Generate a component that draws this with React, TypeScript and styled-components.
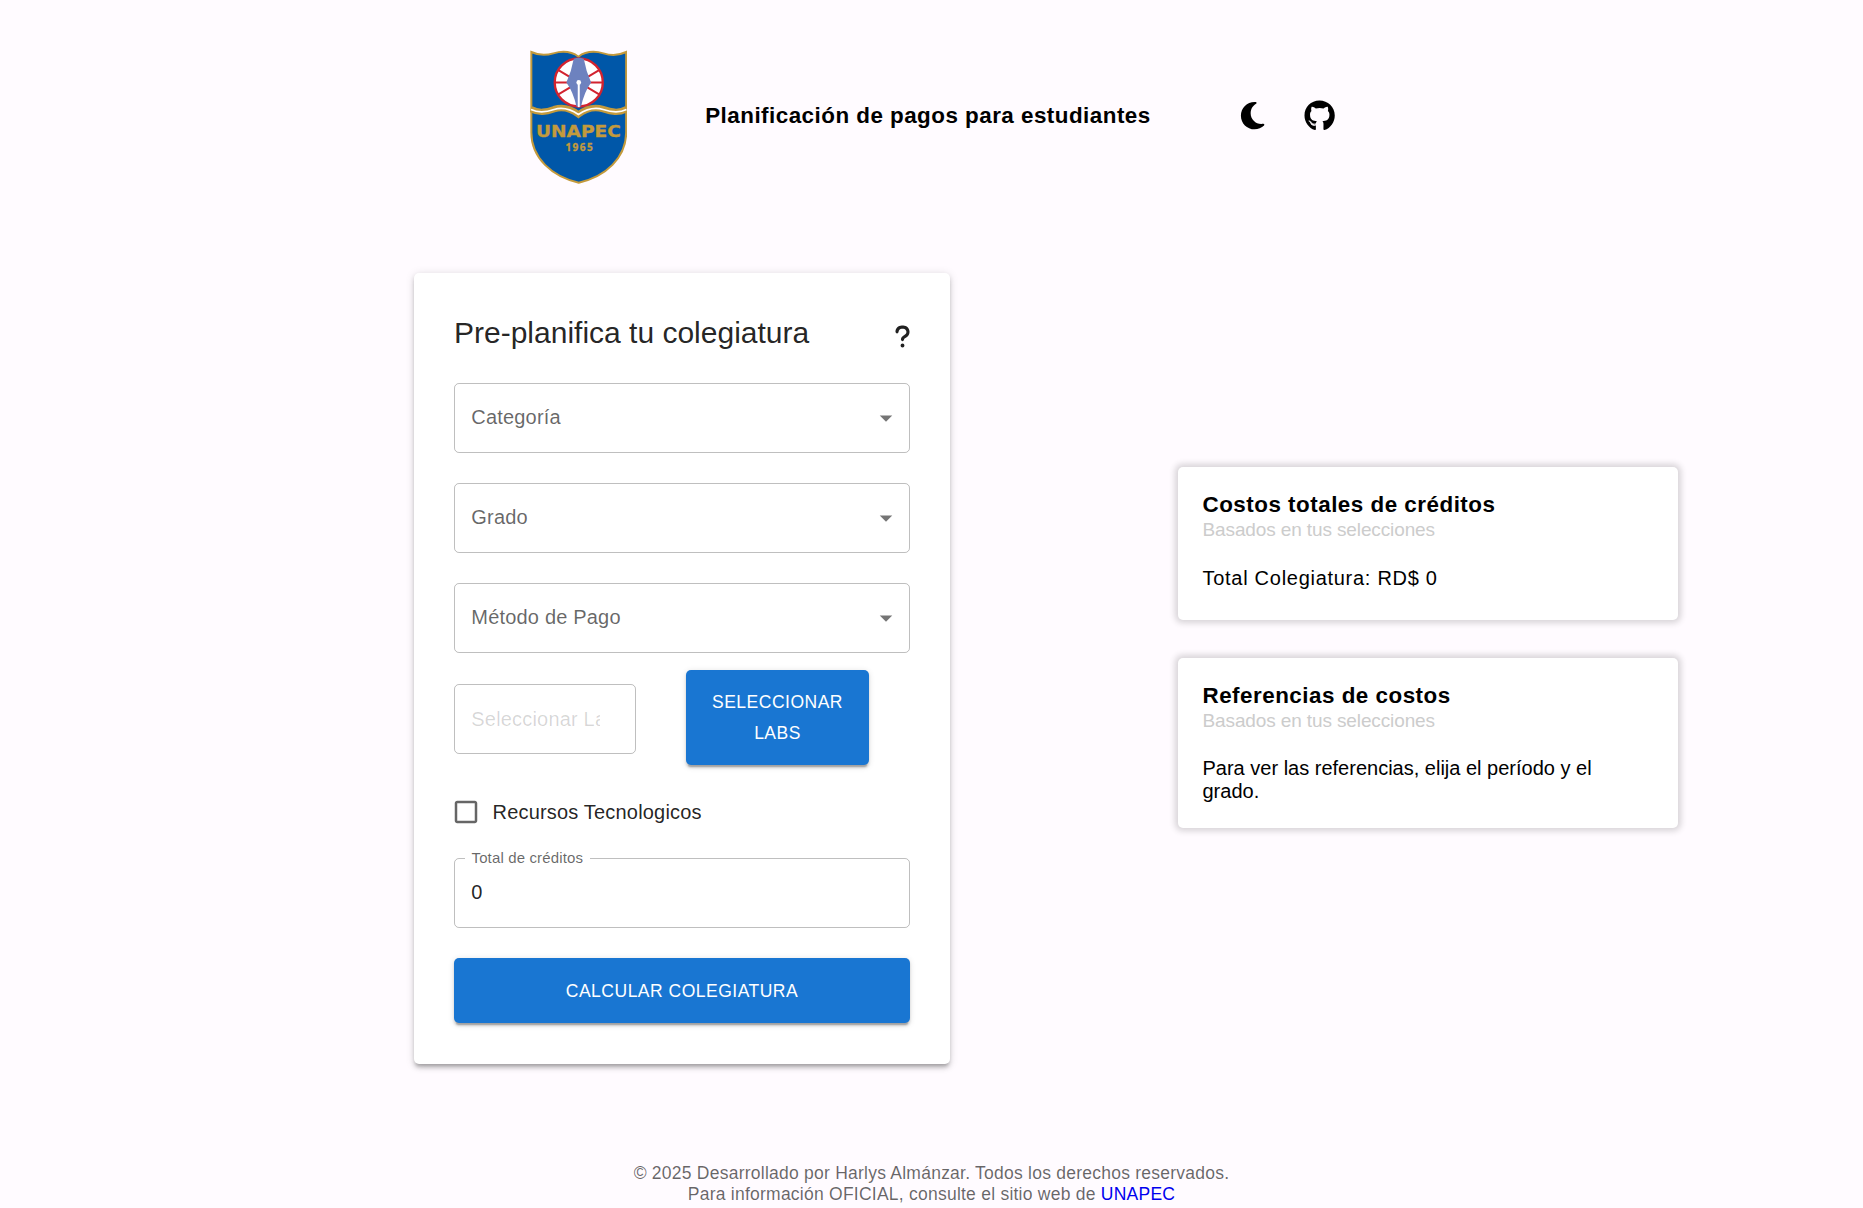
import React, { useState } from "react";
import styled, { createGlobalStyle } from "styled-components";
import { FaGithub, FaMoon, FaQuestion } from "react-icons/fa6";
import { MdArrowDropDown, MdCheckBoxOutlineBlank } from "react-icons/md";

const GlobalStyle = createGlobalStyle`
  *, *::before, *::after { box-sizing: border-box; }
  body {
    margin: 0;
    background: #fffbff;
    color: #000;
    font-family: "Liberation Sans", Arial, sans-serif;
    font-size: 20px;
  }
  h1, h2, p { margin: 0; }
`;

const Page = styled.div`
  height: 1208px;
  overflow: hidden;
  display: flex;
  flex-direction: column;
`;

const Header = styled.header`
  display: flex;
  align-items: center;
  height: 233px;
  padding-left: 529.5px;
`;

const Logo = styled.svg`
  width: 97.5px;
  height: 134px;
  flex: none;
`;

const SiteTitle = styled.h1`
  width: 535px;
  margin-left: 78.2px;
  padding-bottom: 1px;
  font-size: 22.4px;
  line-height: 26px;
  letter-spacing: 0.48px;
  white-space: nowrap;
`;

const HeaderActions = styled.nav`
  display: flex;
  align-items: center;
  gap: 35.5px;
  margin-left: -3.4px;
  padding-bottom: 2px;
  font-size: 31.25px;
  svg { display: block; }
`;

const Main = styled.main`
  display: flex;
  align-items: flex-start;
  gap: 228px;
  margin-top: 40px;
  padding-left: 414px;
`;

const FormCard = styled.form`
  width: 536px;
  height: 790.5px;
  padding: 40px;
  background: #fff;
  border-radius: 5px;
  color: rgba(0, 0, 0, 0.87);
  box-shadow:
    0 3.75px 3.75px -2.5px rgba(0, 0, 0, 0.2),
    0 3.75px 5px 0 rgba(0, 0, 0, 0.14),
    0 1.25px 10px 0 rgba(0, 0, 0, 0.12);
`;

const FormHeader = styled.div`
  display: flex;
  justify-content: space-between;
  align-items: flex-start;
  height: 70.3px;
`;

const FormTitle = styled.h2`
  font-size: 30px;
  font-weight: 400;
  line-height: 40px;
`;

const HelpIcon = styled(FaQuestion)`
  margin: 11.3px -4.5px 0 0;
  font-size: 25px;
`;

const Field = styled.div<{ $narrow?: boolean }>`
  position: relative;
  display: flex;
  align-items: center;
  justify-content: space-between;
  width: ${(p) => (p.$narrow ? "182px" : "100%")};
  height: 70px;
  padding: 0 8px 0 16.3px;
  border: 1px solid rgba(0, 0, 0, 0.25);
  border-radius: 5px;
`;

const FieldStack = styled.div`
  display: flex;
  flex-direction: column;
  gap: 30px;
`;

const FieldText = styled.span<{ $value?: boolean }>`
  padding-bottom: 2px;
  line-height: 28.75px;
  letter-spacing: 0.1875px;
  color: ${(p) => (p.$value ? "rgba(0, 0, 0, 0.87)" : "rgba(0, 0, 0, 0.6)")};
`;

const ClippedText = styled.span`
  width: 129px;
  overflow: hidden;
  white-space: nowrap;
  line-height: 28.75px;
  letter-spacing: 0.1875px;
  color: rgba(0, 0, 0, 0.16);
`;

const FloatingLabel = styled.span`
  position: absolute;
  top: -12px;
  left: 10px;
  padding: 0 7px 0 6.5px;
  background: #fff;
  font-size: 15px;
  line-height: 21.5px;
  letter-spacing: 0.14px;
  color: rgba(0, 0, 0, 0.6);
`;

const DropIcon = styled(MdArrowDropDown)`
  font-size: 30px;
  color: rgba(0, 0, 0, 0.54);
`;

const LabsRow = styled.div`
  display: flex;
  align-items: flex-start;
  gap: 50px;
  margin-top: 17px;
  ${Field} { margin-top: 14px; }
`;

const Button = styled.button<{ $compact?: boolean }>`
  display: block;
  width: ${(p) => (p.$compact ? "183px" : "100%")};
  height: ${(p) => (p.$compact ? "95px" : "65px")};
  padding: 0 20px;
  border: 0;
  border-radius: 5px;
  background: #1976d2;
  color: #fff;
  font: 400 17.5px/30.6px "Liberation Sans", Arial, sans-serif;
  letter-spacing: 0.5px;
  text-transform: uppercase;
  box-shadow:
    0 3.75px 1.25px -2.5px rgba(0, 0, 0, 0.2),
    0 2.5px 2.5px 0 rgba(0, 0, 0, 0.14),
    0 1.25px 6.25px 0 rgba(0, 0, 0, 0.12);
`;

const CheckRow = styled.label`
  display: flex;
  align-items: center;
  gap: 12px;
  height: 93px;
  padding-top: 1px;
  margin-left: -3.5px;
  letter-spacing: 0.1875px;
  svg { font-size: 30px; color: rgba(0, 0, 0, 0.6); }
`;

const Summary = styled.aside`
  display: flex;
  flex-direction: column;
  gap: 38px;
  margin-top: 194px;
`;

const InfoCard = styled.section<{ $height: number }>`
  width: 500px;
  height: ${(p) => p.$height}px;
  padding: 25px 25px 25px 24.5px;
  background: #fff;
  border-radius: 5px;
  box-shadow: 0 0 6px 2.5px rgba(0, 0, 0, 0.16);
`;

const InfoTitle = styled.h2`
  font-size: 22.4px;
  line-height: 26px;
  letter-spacing: 0.5px;
`;

const InfoSubtitle = styled.p`
  font-size: 19px;
  line-height: 23px;
  letter-spacing: -0.12px;
  color: #ccc;
`;

const InfoBody = styled.p<{ $spaced?: boolean }>`
  max-width: 410px;
  margin-top: 25px;
  line-height: ${(p) => (p.$spaced ? 24 : 23)}px;
  letter-spacing: ${(p) => (p.$spaced ? "0.72px" : "0")};
`;

const Footer = styled.footer`
  margin-top: 99px;
  font-size: 17.5px;
  line-height: 21px;
  letter-spacing: 0.24px;
  text-align: center;
  color: rgba(0, 0, 0, 0.6);
  a { color: #0000ee; text-decoration: none; }
`;

function UnapecLogo() {
  return (
    <Logo viewBox="59 29 292 401" preserveAspectRatio="none" role="img" aria-label="UNAPEC">
      <path
        d="M63 35 C86 46 106 46 129 39 C158 31 184 34 204 49 C224 34 250 31 279 39 C302 46 324 46 347 35 V276 C347 352 285 408 205 426 C125 408 63 352 63 276Z"
        fill="#0057a8"
        stroke="#c39a3c"
        strokeWidth="6"
      />
      <circle cx="205" cy="126" r="72" fill="#fff" stroke="#d2232f" strokeWidth="7" />
      <path d="M133 126H277M144 89 L266 162M266 89 L144 162" stroke="#d2232f" strokeWidth="6" />
      <path d="M190 55 Q205 49 220 55 Q226 90 242 126 Q221 155 212 198 H198 Q189 155 168 126 Q184 90 190 55Z" fill="#6d82bf" />
      <path d="M205 126V200" stroke="#fff" strokeWidth="6" />
      <circle cx="205" cy="126" r="7" fill="#fff" />
      <path
        d="M62 206 C87 219 108 214 131 206 C160 197 182 205 204 222 C226 205 249 197 278 206 C302 214 324 219 348 206"
        fill="none"
        stroke="#c39a3c"
        strokeWidth="19"
      />
      <path
        d="M62 207 C87 219 108 215 131 207 C160 198 182 207 204 222 C226 207 249 198 278 207 C302 215 324 219 348 207"
        fill="none"
        stroke="#fff"
        strokeWidth="5"
      />
      <text
        x="77"
        y="290"
        textLength="254"
        lengthAdjust="spacingAndGlyphs"
        fill="#c39a3c"
        stroke="#c39a3c"
        strokeWidth="1"
        fontFamily="DejaVu Sans, sans-serif"
        fontWeight="700"
        fontSize="50"
      >
        UNAPEC
      </text>
      <text
        x="165"
        y="332"
        textLength="82"
        fill="#c39a3c"
        stroke="#c39a3c"
        strokeWidth="1"
        fontFamily="Open Sans, sans-serif"
        fontWeight="700"
        fontSize="30"
      >
        1965
      </text>
    </Logo>
  );
}

const selects = ["Categoría", "Grado", "Método de Pago"];

export default function App() {
  const [credits] = useState(0);
  return (
    <>
      <GlobalStyle />
      <Page>
        <Header>
          <UnapecLogo />
          <SiteTitle>Planificación de pagos para estudiantes</SiteTitle>
          <HeaderActions>
            <FaMoon />
            <FaGithub />
          </HeaderActions>
        </Header>
        <Main>
          <FormCard>
            <FormHeader>
              <FormTitle>Pre-planifica tu colegiatura</FormTitle>
              <HelpIcon />
            </FormHeader>
            <FieldStack>
              {selects.map((label) => (
                <Field key={label}>
                  <FieldText>{label}</FieldText>
                  <DropIcon />
                </Field>
              ))}
            </FieldStack>
            <LabsRow>
              <Field $narrow>
                <ClippedText>Seleccionar Labs</ClippedText>
              </Field>
              <Button type="button" $compact>
                Seleccionar Labs
              </Button>
            </LabsRow>
            <CheckRow>
              <MdCheckBoxOutlineBlank />
              Recursos Tecnologicos
            </CheckRow>
            <FieldStack>
              <Field>
                <FloatingLabel>Total de créditos</FloatingLabel>
                <FieldText $value>{credits}</FieldText>
              </Field>
              <Button type="button">Calcular colegiatura</Button>
            </FieldStack>
          </FormCard>
          <Summary>
            <InfoCard $height={153}>
              <InfoTitle>Costos totales de créditos</InfoTitle>
              <InfoSubtitle>Basados en tus selecciones</InfoSubtitle>
              <InfoBody $spaced>Total Colegiatura: RD$ {credits}</InfoBody>
            </InfoCard>
            <InfoCard $height={170}>
              <InfoTitle>Referencias de costos</InfoTitle>
              <InfoSubtitle>Basados en tus selecciones</InfoSubtitle>
              <InfoBody>Para ver las referencias, elija el período y el grado.</InfoBody>
            </InfoCard>
          </Summary>
        </Main>
        <Footer>
          <p>© 2025 Desarrollado por Harlys Almánzar. Todos los derechos reservados.</p>
          <p>
            Para información OFICIAL, consulte el sitio web de <a href="#unapec">UNAPEC</a>
          </p>
        </Footer>
      </Page>
    </>
  );
}
